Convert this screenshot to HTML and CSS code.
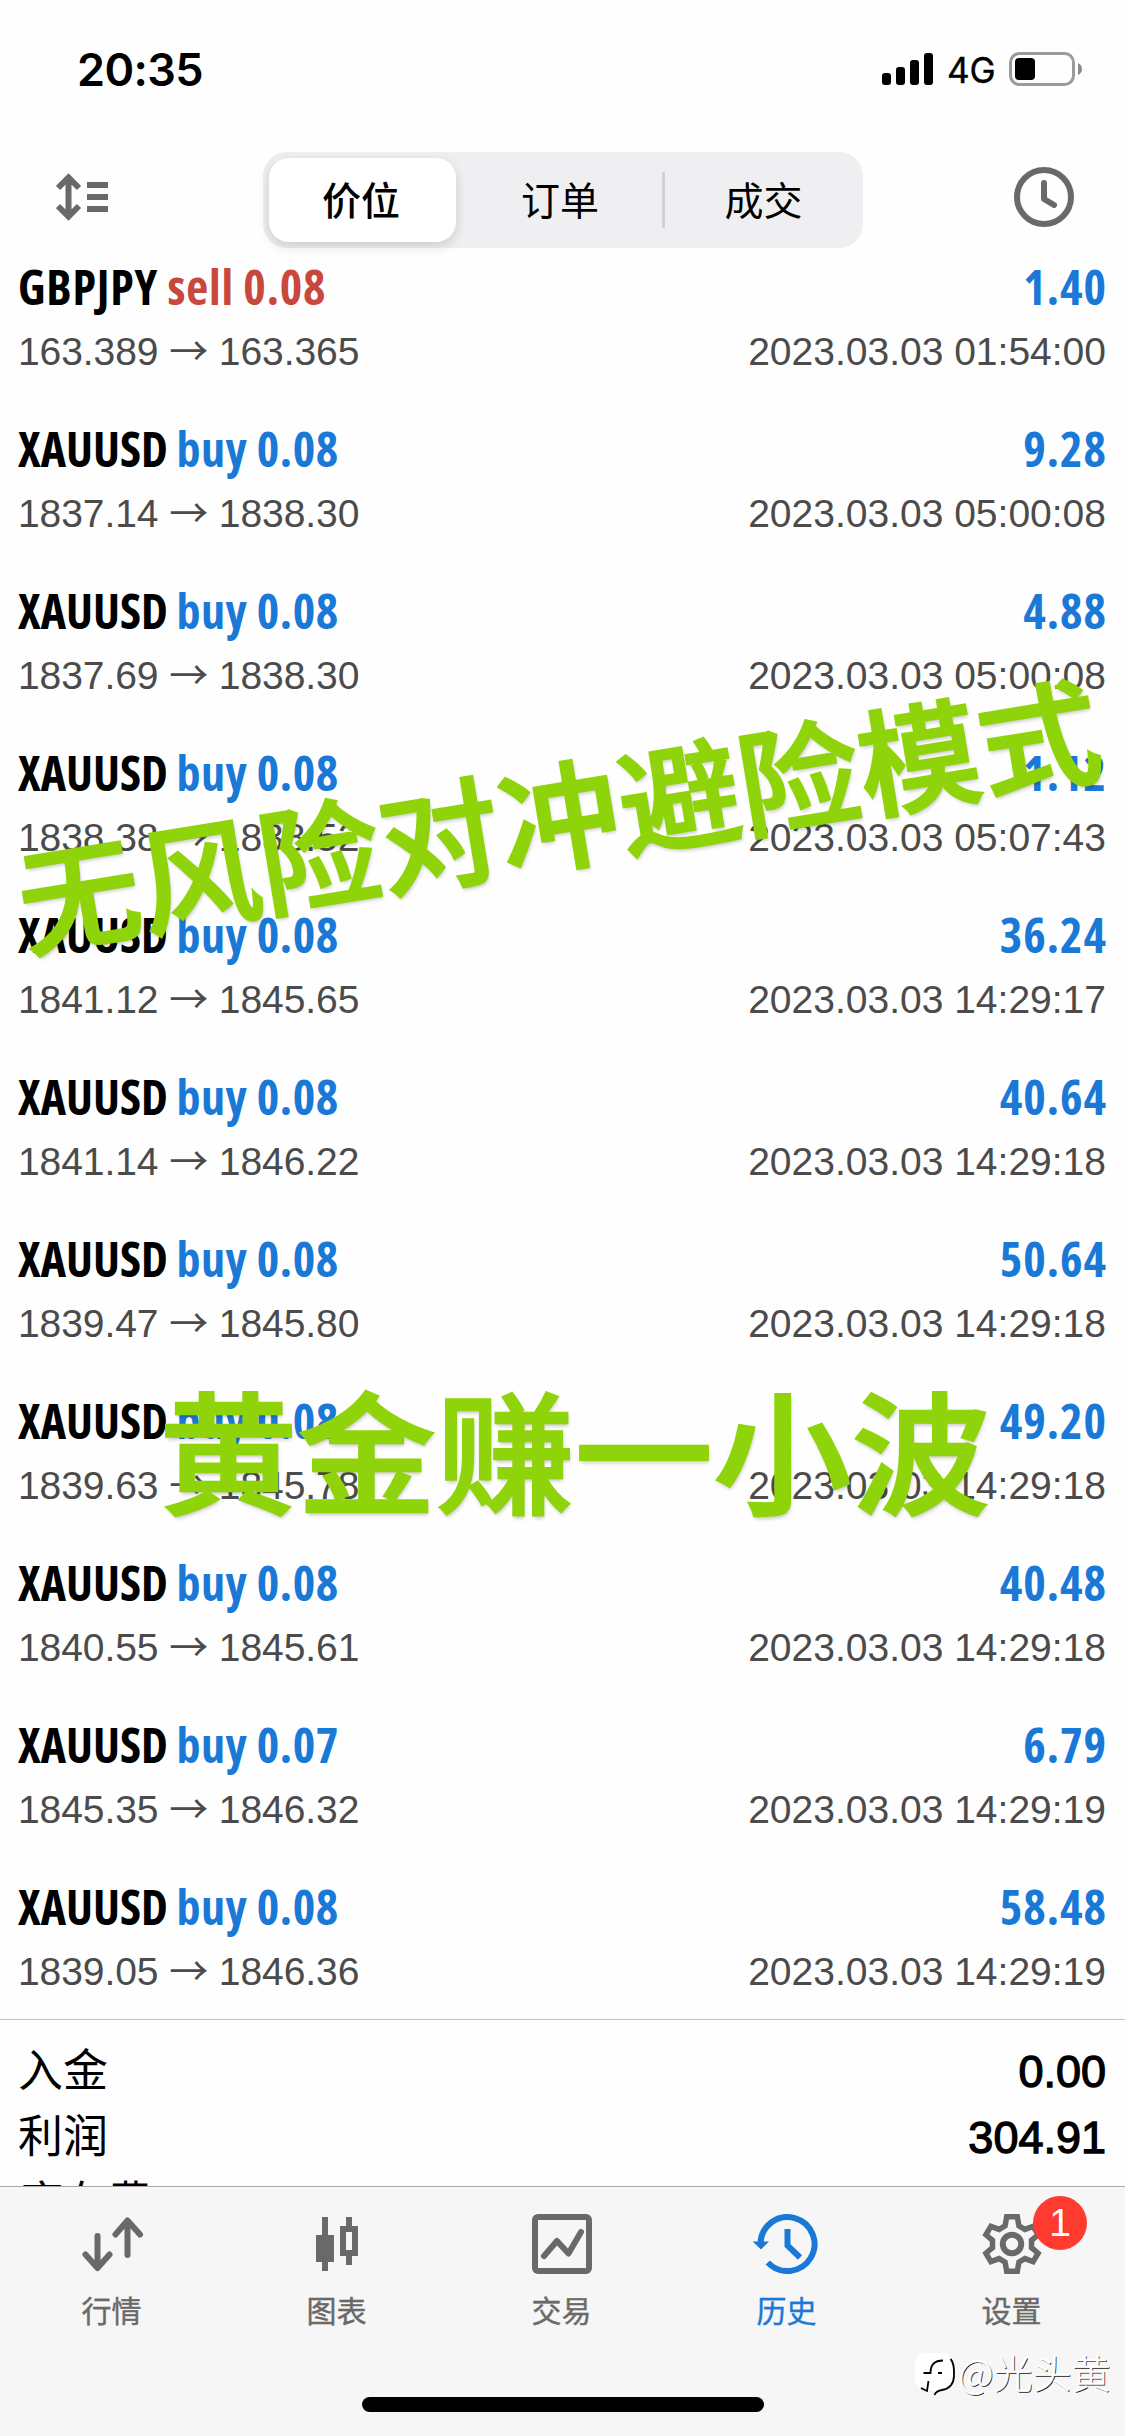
FILE: index.html
```html
<!DOCTYPE html>
<html lang="zh-CN">
<head>
<meta charset="utf-8">
<title>历史</title>
<link rel="stylesheet" href="styles.css">
</head>
<body>
<div class="screen">
  <header class="status">
    <span class="clock">20:35</span>
    <div class="status-right">
      <svg class="signal" width="52" height="34" viewBox="0 0 52 34"><rect x="0" y="21" width="9" height="12" rx="3"/><rect x="14" y="15" width="9" height="18" rx="3"/><rect x="28" y="8" width="9" height="25" rx="3"/><rect x="42" y="1" width="9" height="32" rx="3"/></svg>
      <span class="network">4G</span>
      <svg class="battery" width="74" height="34" viewBox="0 0 74 34"><rect x="1.5" y="1.5" width="63" height="31" rx="9" fill="none" stroke="#9b9b9b" stroke-width="3"/><rect x="6" y="6" width="20" height="22" rx="4"/><path d="M69 11q4 2 4 6t-4 6z" fill="#8c8c8c"/></svg>
    </div>
  </header>
  <nav class="toolbar">
    <svg class="sort" width="52" height="48" viewBox="0 0 52 48" fill="none" stroke="#696969" stroke-width="6"><path d="M12.500 5v38M2 15l10.500-10.500L23 15M2 33l10.500 10.500L23 33M31 12h21M31 24h21M31 36h21"/></svg>
    <div class="segments">
      <span class="segment active">价位</span>
      <span class="segment">订单</span>
      <span class="segment divided">成交</span>
    </div>
    <svg class="period" width="60" height="60" viewBox="0 0 60 60" fill="none" stroke="#696969" stroke-width="6"><circle cx="30" cy="30" r="27"/><path d="M30 16v16l10 6" stroke-linecap="round" stroke-linejoin="round"/></svg>
  </nav>
  <main class="deals">
    <article class="deal"><div class="line"><h2 class="forex">GBPJPY <b class="sell">sell 0.08</b></h2><strong>1.40</strong></div><div class="detail"><span>163.389 <i>→</i> 163.365</span><time>2023.03.03 01:54:00</time></div></article>
    <article class="deal"><div class="line"><h2>XAUUSD <b>buy 0.08</b></h2><strong>9.28</strong></div><div class="detail"><span>1837.14 <i>→</i> 1838.30</span><time>2023.03.03 05:00:08</time></div></article>
    <article class="deal"><div class="line"><h2>XAUUSD <b>buy 0.08</b></h2><strong>4.88</strong></div><div class="detail"><span>1837.69 <i>→</i> 1838.30</span><time>2023.03.03 05:00:08</time></div></article>
    <article class="deal"><div class="line"><h2>XAUUSD <b>buy 0.08</b></h2><strong>1.12</strong></div><div class="detail"><span>1838.38 <i>→</i> 1838.52</span><time>2023.03.03 05:07:43</time></div></article>
    <article class="deal"><div class="line"><h2>XAUUSD <b>buy 0.08</b></h2><strong>36.24</strong></div><div class="detail"><span>1841.12 <i>→</i> 1845.65</span><time>2023.03.03 14:29:17</time></div></article>
    <article class="deal"><div class="line"><h2>XAUUSD <b>buy 0.08</b></h2><strong>40.64</strong></div><div class="detail"><span>1841.14 <i>→</i> 1846.22</span><time>2023.03.03 14:29:18</time></div></article>
    <article class="deal"><div class="line"><h2>XAUUSD <b>buy 0.08</b></h2><strong>50.64</strong></div><div class="detail"><span>1839.47 <i>→</i> 1845.80</span><time>2023.03.03 14:29:18</time></div></article>
    <article class="deal"><div class="line"><h2>XAUUSD <b>buy 0.08</b></h2><strong>49.20</strong></div><div class="detail"><span>1839.63 <i>→</i> 1845.78</span><time>2023.03.03 14:29:18</time></div></article>
    <article class="deal"><div class="line"><h2>XAUUSD <b>buy 0.08</b></h2><strong>40.48</strong></div><div class="detail"><span>1840.55 <i>→</i> 1845.61</span><time>2023.03.03 14:29:18</time></div></article>
    <article class="deal"><div class="line"><h2>XAUUSD <b>buy 0.07</b></h2><strong>6.79</strong></div><div class="detail"><span>1845.35 <i>→</i> 1846.32</span><time>2023.03.03 14:29:19</time></div></article>
    <article class="deal"><div class="line"><h2>XAUUSD <b>buy 0.08</b></h2><strong>58.48</strong></div><div class="detail"><span>1839.05 <i>→</i> 1846.36</span><time>2023.03.03 14:29:19</time></div></article>
  </main>
  <section class="summary">
    <div class="total"><span>入金</span><em>0.00</em></div>
    <div class="total"><span>利润</span><em>304.91</em></div>
    <div class="total"><span>库存费</span></div>
  </section>
  <footer class="tabs">
    <div class="tab">
      <svg width="66" height="60" viewBox="0 0 66 60" fill="none" stroke="#696969" stroke-width="6" stroke-linecap="round" stroke-linejoin="round"><path d="M18.500 22v31M6.500 40.500l12 13.500 12-13.500M48.500 41V7M36.500 20.500l12-14 12.500 14"/></svg>
      <span>行情</span>
    </div>
    <div class="tab">
      <svg width="60" height="60" viewBox="0 0 60 60" fill="#696969"><path d="M15 3h6v18h6v27h-6v9h-6v-9H9V21h6z"/><path fill-rule="evenodd" d="M39 3h6v9h6v30h-6v9h-6v-9h-6V12h6zM39 18v18h6V18z"/></svg>
      <span>图表</span>
    </div>
    <div class="tab">
      <svg width="60" height="60" viewBox="0 0 60 60" fill="none" stroke="#696969" stroke-width="6"><rect x="3" y="3" width="54" height="54" rx="3"/><path d="M12 42l13-15 11.500 12.500L49 18" stroke-linecap="round" stroke-linejoin="round"/></svg>
      <span>交易</span>
    </div>
    <div class="tab current">
      <svg width="72" height="60" viewBox="0 0 72 60" fill="none" stroke="#1a78d6" stroke-width="6"><path d="M9.500 30a27 27 0 1 1 7.300 18.500"/><path d="M36.500 15v16.500l12.500 12"/><path d="M1.500 27.500h16.500l-8 8z" fill="#1a78d6" stroke="none"/></svg>
      <span>历史</span>
    </div>
    <div class="tab">
      <svg width="60" height="60" viewBox="0 0 60 60" fill="none" stroke="#696969" stroke-width="5.500"><circle cx="30" cy="30" r="9.200" stroke-width="6"/><path d="M24.700 2.750h10.600l1.600 9 6 3.600 8.200-3 5 8.400-6.600 5.600v7.300l6.600 5.600-5 8.400-8.200-3-6 3.600-1.600 9H24.700l-1.600-9-6-3.600-8.200 3-5-8.400 6.600-5.600v-7.300l-6.600-5.600 5-8.400 8.200 3 6-3.600z"/></svg>
      <span>设置</span>
      <div class="badge">1</div>
    </div>
    <div class="home-bar"></div>
  </footer>
  <div class="caption tilted">无风险对冲避险模式</div>
  <div class="caption level">黄金赚一小波</div>
  <div class="watermark">
    <svg width="44" height="52" viewBox="0 0 44 52"><path d="M13 6h14q12 0 12 13v10q0 12-12 14l-7 6v-6h-7Q1 41 1 30V18Q1 6 13 6z" fill="#fff"/><path d="M36.500 12q4 4 3.500 17-.5 12-12 14-6 1-7.500 5" fill="none" stroke="#000" stroke-width="1.800"/><path d="M9.500 26h7q0-12.500 12.500-12.500M14.500 34l-1.500 10-6-3M24 26h4" fill="none" stroke="#000" stroke-width="1.800"/></svg>
    <span>@光头黄</span>
  </div>
</div>
</body>
</html>
```
FILE: styles.css
```css
* { box-sizing: border-box; }
body { margin: 0; background: #fefefe; }
.screen {
  position: relative;
  display: flex;
  flex-direction: column;
  width: 1125px;
  height: 2436px;
  overflow: hidden;
  color: #000;
  background: #fefefe;
  font-family: "Liberation Sans", "Noto Sans CJK SC", sans-serif;
}
.status {
  display: flex;
  flex: none;
  justify-content: space-between;
  align-items: center;
  height: 138px;
  padding: 0 42px 0 77px;
  font-family: Inter, sans-serif;
}
.clock { font-size: 45px; font-weight: 600; letter-spacing: -0.6px; }
.status-right { display: flex; align-items: center; }
.network { width: 62px; margin-left: 13px; font-size: 35px; line-height: 34px; padding-top: 1px; -webkit-text-stroke: .4px #000; }
.toolbar {
  display: flex;
  flex: none;
  justify-content: space-between;
  align-items: flex-start;
  height: 116px;
  padding: 14px 51px 0 56px;
}
.sort { margin-top: 21px; }
.period { margin-top: 15px; }
.segments {
  display: grid;
  grid-template-columns: 187px 1fr 201px;
  width: 600px;
  height: 96px;
  padding: 6px 0 6px 6px;
  margin-left: 49px;
  margin-right: 46px;
  border-radius: 24px;
  background: #efeff1;
}
.segment { display: flex; justify-content: center; font: 39px/80px "Noto Sans CJK SC", sans-serif; padding-left: 3px; }
.segment.active { padding: 0 2px 0 0; background: #fff; border-radius: 20px; font-weight: 500; box-shadow: 0 4px 12px rgba(0,0,0,.15); }
.segment.divided { background: linear-gradient(#d3d3d6, #d3d3d6) 0 50% / 3px 56px no-repeat; }
.deals { flex: none; height: 1765px; padding: 5px 19px 0 18px; }
.deal { height: 162px; }
.line, .detail, .total { display: flex; justify-content: space-between; white-space: nowrap; }
.line { height: 56px; font: 660 48px/56px "Open Sans", sans-serif; font-stretch: 77.5%; }
.line h2 { margin: 0; font: inherit; font-stretch: 77.5%; }
.line b, .line strong { color: #1a78d6; font-weight: inherit; }
.line b { letter-spacing: .6px; }
.line strong { letter-spacing: 1px; margin-right: -1px; }
.line .forex { letter-spacing: .8px; }
.line .sell { color: #c9483d; letter-spacing: .8px; }
.detail { height: 44px; margin-top: 15px; color: #4b4b4b; font-size: 39px; line-height: 44px; }
.detail span { letter-spacing: -.08px; }
.detail i { font: 39px/0 "Noto Sans CJK SC", sans-serif; }
.summary { flex: none; height: 167px; padding: 15px 19px 0 18px; border-top: 1px solid #c4c4c4; overflow: hidden; }
.total { height: 66px; font: 45px/66px "Noto Sans CJK SC", sans-serif; }
.total em { padding-top: 4px; font-family: "Liberation Sans", sans-serif; font-style: normal; -webkit-text-stroke: 1.3px #000; }
.tabs {
  position: relative;
  display: grid;
  grid-template-columns: repeat(5, 225px);
  flex: none;
  height: 250px;
  border-top: 1px solid #a9a9a9;
  background: #f6f6f6;
}
.tab {
  position: relative;
  display: flex;
  flex-direction: column;
  align-items: center;
  padding: 27px 2px 0 0;
  color: #696969;
  font: 30px/40px "Noto Sans CJK SC", sans-serif;
}
.tab span { margin-top: 15px; -webkit-text-stroke: .4px currentColor; }
.current { color: #1a78d6; }
.badge {
  position: absolute;
  left: 133px;
  top: 9px;
  width: 54px;
  height: 54px;
  border-radius: 50%;
  background: #ff3b30;
  color: #fff;
  text-align: center;
  font: 39px/54px "Liberation Sans", sans-serif;
}
.home-bar { position: absolute; left: 362px; top: 210px; width: 402px; height: 15px; border-radius: 8px; background: #000; }
.caption {
  position: absolute;
  color: #8fd40a;
  font-family: "Noto Sans CJK SC", sans-serif;
  font-weight: 500;
  white-space: nowrap;
  -webkit-text-stroke: 2.5px #8fd40a;
  text-shadow: 1px 3px 4px rgba(0,0,0,.22);
}
.tilted { left: 11px; top: 720px; width: 1098px; font-size: 121.5px; line-height: 180px; transform: rotate(-9.3deg) scaleY(.96); }
.level { left: 159px; top: 1347px; font-size: 138.5px; line-height: 200px; transform: scaleY(.95); }
.watermark {
  position: absolute;
  left: 914px;
  top: 2347px;
  display: flex;
  color: #fff;
  font: 300 39px/48px "Noto Sans CJK SC", sans-serif;
  white-space: nowrap;
  text-shadow: 1px 1px 0 #222;
}
.watermark span { -webkit-text-stroke: .5px #fff; }
```
